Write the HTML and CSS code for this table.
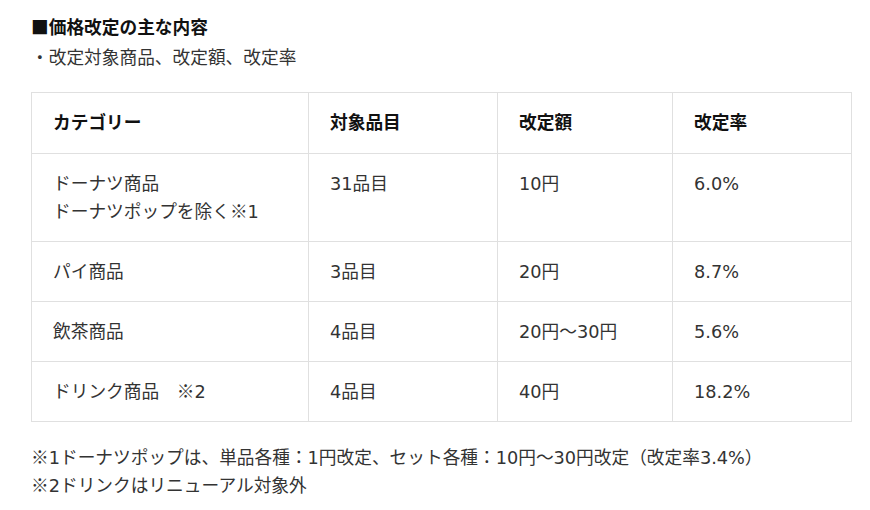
FILE: index.html
```html
<!DOCTYPE html>
<html lang="ja">
<head>
<meta charset="utf-8">
<link rel="stylesheet" href="styles.css">
</head>
<body>
<div class="page">
  <h2 class="title"><span class="cjk">■</span>価格改定の主な内容</h2>
  <p class="lead">・改定対象商品、改定額、改定率</p>
  <table class="price-table">
    <colgroup>
      <col class="c1"><col class="c2"><col class="c3"><col class="c4">
    </colgroup>
    <thead>
      <tr><th>カテゴリー</th><th>対象品目</th><th>改定額</th><th>改定率</th></tr>
    </thead>
    <tbody>
      <tr><td>ドーナツ商品<br>ドーナツポップを除く<span class="cjk">※</span>1</td><td>31品目</td><td>10円</td><td>6.0%</td></tr>
      <tr><td>パイ商品</td><td>3品目</td><td>20円</td><td>8.7%</td></tr>
      <tr><td>飲茶商品</td><td>4品目</td><td>20円～30円</td><td>5.6%</td></tr>
      <tr><td>ドリンク商品　<span class="cjk">※</span>2</td><td>4品目</td><td>40円</td><td>18.2%</td></tr>
    </tbody>
  </table>
  <p class="note"><span class="cjk">※</span>1ドーナツポップは、単品各種：1円改定、セット各種：10円～30円改定（改定率3.4%）</p>
  <p class="note"><span class="cjk">※</span>2ドリンクはリニューアル対象外</p>
</div>
</body>
</html>
```

FILE: styles.css
```css
html, body {
  margin: 0;
  padding: 0;
  background: #fff;
}
body {
  font-family: "DejaVu Sans", "Noto Sans CJK JP", sans-serif;
  font-size: 17.7px;
  line-height: 28px;
  color: #333;
}
.cjk {
  font-family: "Noto Sans CJK JP", sans-serif;
  line-height: 1;
}
.page {
  padding: 14px 19px 0 31px;
}
.title {
  margin: 0;
  font-size: 17.7px;
  line-height: 28px;
  font-weight: bold;
  color: #111;
}
.lead {
  margin: 2px 0 0 0;
}
.price-table {
  margin-top: 20px;
  width: 820px;
  border-collapse: collapse;
  table-layout: fixed;
}
.c1 { width: 277px; }
.c2 { width: 189px; }
.c3 { width: 175px; }
.c4 { width: 179px; }
.price-table th,
.price-table td {
  border: 1px solid #e0e0e0;
  padding: 16px 21px 15px;
  text-align: left;
  vertical-align: top;
  line-height: 28px;
}
.price-table th {
  font-weight: bold;
  color: #111;
  padding-bottom: 16px;
}
.note {
  margin: 0;
}
.price-table + .note {
  margin-top: 22px;
}
```
